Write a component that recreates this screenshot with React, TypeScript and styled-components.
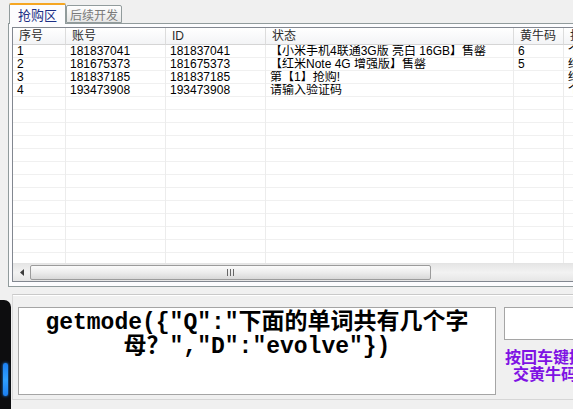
import styled, { createGlobalStyle } from "styled-components";

const GlobalStyle = createGlobalStyle`
  html, body {
    margin: 0;
    padding: 0;
    background: #f0f0f0;
  }
  body {
    font-family: "Liberation Sans", "Noto Sans CJK SC", sans-serif;
    font-size: 12px;
  }
`;

type Column = { title: string; width: number; cells: string[] };

const columns: Column[] = [
  { title: "序号", width: 53, cells: ["1", "2", "3", "4"] },
  { title: "账号", width: 100, cells: ["181837041", "181675373", "181837185", "193473908"] },
  { title: "ID", width: 100, cells: ["181837041", "181675373", "181837185", "193473908"] },
  {
    title: "状态",
    width: 248,
    cells: ["【小米手机4联通3G版 亮白 16GB】售罄", "【红米Note 4G 增强版】售罄", "第【1】抢购!", "请输入验证码"],
  },
  { title: "黄牛码", width: 50, cells: ["6", "5", "", ""] },
  { title: "抢购状态", width: 90, cells: ["个人", "结束", "结束", "个人"] },
];

export default function App() {
  return (
    <Window>
      <GlobalStyle />
      <TabStrip>
        <Tab $active>抢购区</Tab>
        <Tab>后续开发</Tab>
      </TabStrip>
      <TabPanel>
        <ListView>
          <Columns>
            {columns.map((col) => (
              <ListColumn key={col.title} $width={col.width}>
                <HeaderCell>{col.title}</HeaderCell>
                <ColumnBody>
                  {col.cells.map((c, i) => (
                    <Cell key={i}>{c}</Cell>
                  ))}
                </ColumnBody>
              </ListColumn>
            ))}
          </Columns>
          <ScrollBar>
            <ArrowButton>
              <svg width="4" height="7" viewBox="0 0 4 7">
                <polygon points="4,0 0,3.5 4,7" fill="#3c3c3c" />
              </svg>
            </ArrowButton>
            <Thumb>
              <Grip />
            </Thumb>
          </ScrollBar>
        </ListView>
      </TabPanel>
      <BottomPanel>
        <QuestionBox>
          <QuestionLine>getmode({"{"}″Q″:″下面的单词共有几个字</QuestionLine>
          <QuestionLine>母？″,″D″:″evolve″{"}"})</QuestionLine>
        </QuestionBox>
        <SideColumn>
          <CodeInput />
          <Hint>
            <HintLine>按回车键提</HintLine>
            <HintLine>交黄牛码</HintLine>
          </Hint>
        </SideColumn>
      </BottomPanel>
      <DesktopEdge>
        <GlowBar />
      </DesktopEdge>
    </Window>
  );
}

const Window = styled.div`
  position: relative;
  width: 573px;
  height: 409px;
  overflow: hidden;
  background: #f0f0f0;
  padding-left: 8px;
  box-sizing: border-box;
  display: flex;
  flex-direction: column;
`;

const TabStrip = styled.div`
  height: 23px;
  display: flex;
  align-items: flex-end;
  padding-left: 1px;
`;

const Tab = styled.div<{ $active?: boolean }>`
  box-sizing: border-box;
  height: ${(p) => (p.$active ? 21 : 18)}px;
  margin-bottom: ${(p) => (p.$active ? -1 : 0)}px;
  padding: 0 ${(p) => (p.$active ? 8 : 3)}px;
  display: flex;
  align-items: center;
  border: 1px solid #919b9c;
  border-bottom: ${(p) => (p.$active ? "none" : "1px solid #919b9c")};
  border-top: ${(p) => (p.$active ? "2px solid #f5a623" : "1px solid #919b9c")};
  border-radius: 2px 2px 0 0;
  background: ${(p) => (p.$active ? "#fcfcfe" : "linear-gradient(#fefefe, #e6e6e6)")};
  color: ${(p) => (p.$active ? "#1d2f86" : "#7a7a7a")};
  font-size: ${(p) => (p.$active ? 13 : 12)}px;
  position: relative;
  z-index: ${(p) => (p.$active ? 2 : 1)};
`;

const TabPanel = styled.div`
  box-sizing: border-box;
  height: 264px;
  margin-right: -30px;
  border: 1px solid #919b9c;
  background: #fcfcfe;
  padding: 3px;
`;

const ListView = styled.div`
  box-sizing: border-box;
  height: 255px;
  border: 1px solid #828790;
  background: #fff;
  display: flex;
  flex-direction: column;
  overflow: hidden;
`;

const Columns = styled.div`
  flex: 1;
  display: flex;
  min-height: 0;
`;

const ListColumn = styled.div<{ $width: number }>`
  box-sizing: border-box;
  flex: 0 0 ${(p) => p.$width}px;
  display: flex;
  flex-direction: column;
  border-right: 1px solid #ececec;
`;

const HeaderCell = styled.div`
  height: 16px;
  line-height: 16px;
  padding-left: 6px;
  color: #2b2b2b;
  background: linear-gradient(#ffffff, #f3f4f6);
  border-bottom: 1px solid #d5d5d5;
  border-right: 1px solid #dcdcdc;
  margin-right: -1px;
  white-space: nowrap;
  overflow: hidden;
`;

const ColumnBody = styled.div`
  flex: 1;
  background: repeating-linear-gradient(
    to bottom,
    transparent 0,
    transparent 12px,
    #f0f0f0 12px,
    #f0f0f0 13px
  );
`;

const Cell = styled.div`
  height: 13px;
  line-height: 13px;
  padding-left: 4px;
  color: #000;
  white-space: nowrap;
  overflow: hidden;
`;

const ScrollBar = styled.div`
  height: 17px;
  display: flex;
  align-items: stretch;
  background: linear-gradient(#e6e6e6, #f2f2f2 50%, #e6e6e6);
  border-top: 1px solid #e4e4e4;
`;

const ArrowButton = styled.div`
  width: 17px;
  display: flex;
  align-items: center;
  justify-content: center;
`;

const Thumb = styled.div`
  box-sizing: border-box;
  width: 401px;
  margin: 1px 0;
  border: 1px solid #9b9b9b;
  border-radius: 2px;
  background: linear-gradient(#fbfbfb, #ececec 50%, #d8d8d8);
  display: flex;
  align-items: center;
  justify-content: center;
`;

const Grip = styled.div`
  width: 8px;
  height: 7px;
  background: repeating-linear-gradient(to right, #666 0, #666 1px, transparent 1px, transparent 3px);
`;

const BottomPanel = styled.div`
  box-sizing: border-box;
  height: 106px;
  margin-top: 7px;
  margin-left: 4px;
  margin-right: -40px;
  border-top: 1px solid #c9c9c9;
  border-left: 1px solid #d9d9d9;
  border-bottom: 1px solid #d6d6d6;
  box-shadow: inset 0 1px 0 #fff;
  padding: 12px 0 0 5px;
  display: flex;
  gap: 8px;
`;

const QuestionBox = styled.div`
  box-sizing: border-box;
  width: 478px;
  height: 88px;
  border: 1px solid #a5a5a5;
  background: #fff;
  padding: 3px 0 0 0;
  text-align: center;
  font-family: "Liberation Mono", "Noto Sans CJK SC", monospace;
  font-weight: bold;
  font-size: 23px;
  color: #000;
`;

const QuestionLine = styled.div`
  height: 24px;
  line-height: 24px;
  white-space: nowrap;
  overflow: visible;
`;

const SideColumn = styled.div`
  width: 82px;
  display: flex;
  flex-direction: column;
  gap: 8px;
`;

const CodeInput = styled.div`
  box-sizing: border-box;
  width: 110px;
  height: 33px;
  border: 1px solid #a5a5a5;
  background: #fff;
`;

const Hint = styled.div`
  text-align: center;
  color: #7f12e4;
  font-family: "Noto Sans CJK SC", sans-serif;
  font-weight: bold;
  font-size: 16px;
  white-space: nowrap;
`;

const HintLine = styled.div`
  height: 17px;
  line-height: 17px;
`;

const DesktopEdge = styled.div`
  position: absolute;
  left: 0;
  top: 300px;
  width: 11px;
  height: 109px;
  background: #0d0d0f;
  border-top-right-radius: 7px;
`;

const GlowBar = styled.div`
  position: absolute;
  left: 3px;
  top: 63px;
  width: 5px;
  height: 33px;
  border-radius: 2px;
  background: linear-gradient(#1c7ff0, #2fa0ff 50%, #1c7ff0);
  box-shadow: 0 0 3px #1a8cff;
`;
